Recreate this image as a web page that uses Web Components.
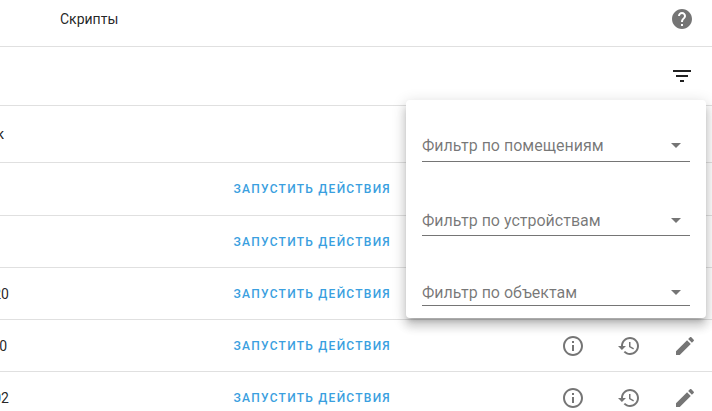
<!DOCTYPE html>
<html><head><meta charset="utf-8"><style>
html,body{margin:0;padding:0;background:#fff;overflow:hidden}
body{font-family:Roboto,"Liberation Sans",sans-serif;color:rgba(0,0,0,.87)}
</style></head><body>
<template id="t-icon"><style>
:host{display:inline-flex;width:24px;height:24px;flex:none;color:rgba(0,0,0,.54)}
svg{width:24px;height:24px;fill:currentColor;display:block}
</style><svg viewBox="0 0 24 24"><path></path></svg></template>

<template id="t-top"><style>
:host{display:flex;align-items:center;height:38px;padding:0 18px 8px 60px;border-bottom:1px solid #e0e0e0;justify-content:space-between;font-size:14px;color:rgba(0,0,0,.87)}
</style><slot></slot></template>

<template id="t-tool"><style>
:host{display:flex;align-items:center;justify-content:flex-end;height:58px;border-bottom:1px solid #e0e0e0;padding:0 18px 0 0}
</style><slot></slot></template>

<template id="t-row"><style>
:host{display:flex;align-items:center;height:var(--h,51px);border-bottom:1px solid #e0e0e0;font-size:14px;color:rgba(0,0,0,.87)}
.cut{width:var(--cut,9px);overflow:hidden;display:flex;justify-content:flex-end;white-space:nowrap;flex:none}
.act{margin-left:calc(233.5px - var(--cut,9px));font-size:12px;font-weight:500;letter-spacing:1.25px;color:#3a9fe0;white-space:nowrap}
.icons{margin-left:auto;margin-right:15px;display:flex}
</style><div class="cut"><slot name="cut"></slot></div><div class="act"><slot name="act"></slot></div><div class="icons"><slot name="icons"></slot></div></template>

<template id="t-field"><style>
:host{display:flex;align-items:center;justify-content:space-between;border-bottom:1px solid #757575;height:var(--fh,30px);margin-top:var(--mt,44px);font-size:16px;color:rgba(0,0,0,.54)}
.a{width:0;height:0;border:5px solid transparent;border-top-color:rgba(0,0,0,.54);border-bottom:0;margin-right:9px}
</style><span><slot></slot></span><span class="a"></span></template>

<template id="t-pop"><style>
:host{position:absolute;left:406px;top:100px;width:268px;height:218px;background:#fff;border-radius:4px;padding:0 16px;box-shadow:0 5px 5px -3px rgba(0,0,0,.2),0 8px 10px 1px rgba(0,0,0,.14),0 3px 14px 2px rgba(0,0,0,.12);display:flex;flex-direction:column}
</style><slot></slot></template>

<template id="t-page"><style>
:host{display:block;position:relative;width:712px;height:411px;overflow:hidden;background:#fff}
</style><slot></slot></template>

<x-page>
  <x-top><span>Скрипты</span><x-icon name="help"></x-icon></x-top>
  <x-tool><x-icon name="filter" style="color:#212121"></x-icon></x-tool>
  <x-row style="--h:56px;--cut:4px"><span slot="cut">к</span></x-row>
  <x-row style="--h:52px"><span slot="act">ЗАПУСТИТЬ ДЕЙСТВИЯ</span></x-row>
  <x-row><span slot="act">ЗАПУСТИТЬ ДЕЙСТВИЯ</span></x-row>
  <x-row><span slot="cut">20</span><span slot="act">ЗАПУСТИТЬ ДЕЙСТВИЯ</span></x-row>
  <x-row style="--cut:7px"><span slot="cut">0</span><span slot="act">ЗАПУСТИТЬ ДЕЙСТВИЯ</span>
    <x-icon slot="icons" name="info"></x-icon><x-icon slot="icons" name="history" style="margin-left:32px"></x-icon><x-icon slot="icons" name="edit" style="margin-left:32px"></x-icon></x-row>
  <x-row><span slot="cut">02</span><span slot="act">ЗАПУСТИТЬ ДЕЙСТВИЯ</span>
    <x-icon slot="icons" name="info"></x-icon><x-icon slot="icons" name="history" style="margin-left:32px"></x-icon><x-icon slot="icons" name="edit" style="margin-left:32px"></x-icon></x-row>
  <x-pop>
    <x-field style="--mt:29px;--fh:32px">Фильтр по помещениям</x-field>
    <x-field style="--mt:43px;--fh:30px">Фильтр по устройствам</x-field>
    <x-field style="--mt:43px;--fh:26px">Фильтр по объектам</x-field>
  </x-pop>
</x-page>

<script>
const P={
help:"M12 2C6.48 2 2 6.48 2 12s4.48 10 10 10 10-4.48 10-10S17.52 2 12 2zm1 17h-2v-2h2v2zm2.07-7.75l-.9.92C13.45 12.9 13 13.5 13 15h-2v-.5c0-1.1.45-2.1 1.17-2.83l1.24-1.26c.37-.36.59-.86.59-1.41 0-1.1-.9-2-2-2s-2 .9-2 2H8c0-2.21 1.79-4 4-4s4 1.79 4 4c0 .88-.36 1.68-.93 2.25z",
filter:"M10 18h4v-2h-4v2zM3 6v2h18V6H3zm3 7h12v-2H6v2z",
info:"M11 7h2v2h-2zm0 4h2v6h-2zm1-9C6.48 2 2 6.48 2 12s4.48 10 10 10 10-4.48 10-10S17.52 2 12 2zm0 18c-4.41 0-8-3.59-8-8s3.59-8 8-8 8 3.59 8 8-3.59 8-8 8z",
history:"M13 3c-4.97 0-9 4.03-9 9H1l3.89 3.89.07.14L9 12H6c0-3.87 3.13-7 7-7s7 3.13 7 7-3.13 7-7 7c-1.93 0-3.68-.79-4.94-2.06l-1.42 1.42C8.27 19.99 10.51 21 13 21c4.97 0 9-4.03 9-9s-4.03-9-9-9zm-1 5v5l4.28 2.54.72-1.21-3.5-2.08V8H12z",
edit:"M3 17.25V21h3.75L17.81 9.94l-3.75-3.75L3 17.25zM20.71 7.04c.39-.39.39-1.02 0-1.41l-2.34-2.34c-.39-.39-1.02-.39-1.41 0l-1.83 1.83 3.75 3.75 1.83-1.83z"};
function def(n,t,init){customElements.define(n,class extends HTMLElement{constructor(){super();this.attachShadow({mode:"open"}).append(document.getElementById(t).content.cloneNode(true));}connectedCallback(){init&&init(this)}})}
def("x-page","t-page");def("x-top","t-top");def("x-tool","t-tool");def("x-row","t-row");def("x-field","t-field");def("x-pop","t-pop");
def("x-icon","t-icon",e=>e.shadowRoot.querySelector("path").setAttribute("d",P[e.getAttribute("name")]));
</script>
</body></html>
